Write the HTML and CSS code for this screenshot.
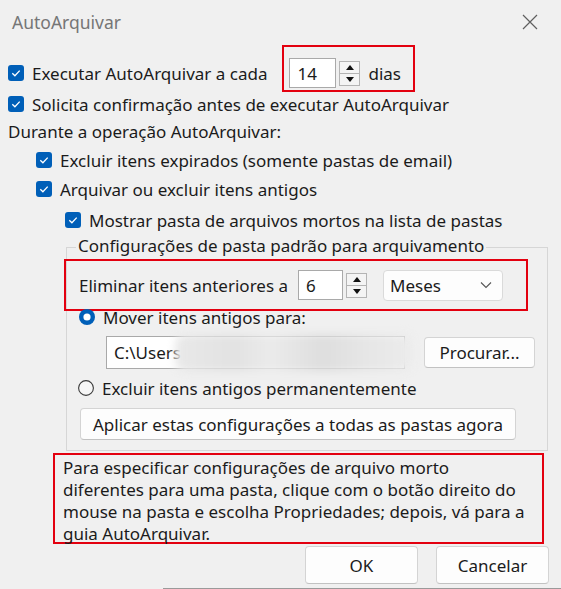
FILE: index.html
```html
<!DOCTYPE html>
<html lang="pt-BR">
<head>
<meta charset="utf-8">
<title>AutoArquivar</title>
<link rel="stylesheet" href="styles.css">
</head>
<body>
<div class="dialog">
  <div class="titlebar">
    <span class="title">AutoArquivar</span>
    <svg class="close" width="16" height="16" viewBox="0 0 16 16"><path d="M1 1 L15 15 M15 1 L1 15" stroke="#5f5f5f" stroke-width="1.2" fill="none"/></svg>
  </div>
  <div class="main">
    <div class="row r1">
      <svg class="cb" width="16" height="16" viewBox="0 0 16 16"><rect width="16" height="16" rx="3" fill="#005fb8"/><path d="M4.3 8.3 L6.9 10.8 L11.7 5.6" stroke="#fff" stroke-width="1.3" fill="none"/></svg>
      <span class="label">Executar AutoArquivar a cada</span>
      <div class="mark mark1">
        <div class="num num1">14</div>
        <div class="spin"><span class="up"></span><span class="down"></span></div>
        <span class="unit">dias</span>
      </div>
    </div>
    <div class="row r2">
      <svg class="cb" width="16" height="16" viewBox="0 0 16 16"><rect width="16" height="16" rx="3" fill="#005fb8"/><path d="M4.3 8.3 L6.9 10.8 L11.7 5.6" stroke="#fff" stroke-width="1.3" fill="none"/></svg>
      <span class="label">Solicita confirmação antes de executar AutoArquivar</span>
    </div>
    <div class="row r3">
      <span class="text">Durante a operação AutoArquivar:</span>
    </div>
    <div class="row r4 ind1">
      <svg class="cb" width="16" height="16" viewBox="0 0 16 16"><rect width="16" height="16" rx="3" fill="#005fb8"/><path d="M4.3 8.3 L6.9 10.8 L11.7 5.6" stroke="#fff" stroke-width="1.3" fill="none"/></svg>
      <span class="label">Excluir itens expirados (somente pastas de email)</span>
    </div>
    <div class="row r5 ind1">
      <svg class="cb" width="16" height="16" viewBox="0 0 16 16"><rect width="16" height="16" rx="3" fill="#005fb8"/><path d="M4.3 8.3 L6.9 10.8 L11.7 5.6" stroke="#fff" stroke-width="1.3" fill="none"/></svg>
      <span class="label">Arquivar ou excluir itens antigos</span>
    </div>
    <div class="row r6 ind2">
      <svg class="cb" width="16" height="16" viewBox="0 0 16 16"><rect width="16" height="16" rx="3" fill="#005fb8"/><path d="M4.3 8.3 L6.9 10.8 L11.7 5.6" stroke="#fff" stroke-width="1.3" fill="none"/></svg>
      <span class="label">Mostrar pasta de arquivos mortos na lista de pastas</span>
    </div>

    <div class="group">
      <div class="legend-row"><span class="legend">Configurações de pasta padrão para arquivamento</span></div>
      <div class="mark mark2">
        <span class="text">Eliminar itens anteriores a</span>
        <div class="num num2">6</div>
        <div class="spin"><span class="up"></span><span class="down"></span></div>
        <div class="select"><span>Meses</span>
          <svg width="12" height="8" viewBox="0 0 12 8"><path d="M1 1.5 L6 6.5 L11 1.5" stroke="#555" stroke-width="1.1" fill="none"/></svg>
        </div>
      </div>
      <div class="row rmove">
        <svg class="radio" width="16" height="16" viewBox="0 0 16 16"><circle cx="8" cy="8" r="8" fill="#005fb8"/><circle cx="8" cy="8" r="3.6" fill="#fff"/></svg>
        <span class="label rlabel">Mover itens antigos para:</span>
      </div>
      <div class="row rpath">
        <div class="path"><span>C:\Users</span><div class="blur"></div></div>
        <button class="btn browse">Procurar...</button>
      </div>
      <div class="row rdel">
        <svg class="radio" width="16" height="16" viewBox="0 0 16 16"><circle cx="8" cy="8" r="7.4" fill="#f6f6f6" stroke="#3a3a3a" stroke-width="1.1"/></svg>
        <span class="label rlabel">Excluir itens antigos permanentemente</span>
      </div>
      <button class="btn apply">Aplicar estas configurações a todas as pastas agora</button>
    </div>

    <div class="mark info">Para especificar configurações de arquivo morto<br>diferentes para uma pasta, clique com o botão direito do<br>mouse na pasta e escolha Propriedades; depois, vá para a<br>guia AutoArquivar.</div>

    <div class="actions">
      <button class="btn act">OK</button>
      <button class="btn act">Cancelar</button>
    </div>
  </div>
  <div class="bottomline"></div>
</div>
</body>
</html>
```
FILE: styles.css
```css
* { box-sizing: border-box; }
html, body { margin: 0; padding: 0; }
body {
  background: #f0f0f0;
  font-family: "Noto Sans", "Open Sans", sans-serif;
  font-size: 17px;
  color: #1b1b1b;
  width: 561px;
  height: 589px;
  overflow: hidden;
}
.dialog { position: relative; height: 589px; }
.titlebar {
  height: 44px;
  display: flex;
  align-items: center;
  justify-content: space-between;
  padding: 0 23px 0 12px;
}
.title { color: #767676; font-size: 17.5px; }
.close { display: block; }
.main { padding-left: 8px; }
.row { display: flex; align-items: center; height: 24px; }
.cb, .radio { flex: none; display: block; }
.label { margin-left: 8px; white-space: nowrap; }
.text { white-space: nowrap; }
.r1 { margin-top: 17px; }
.r2 { margin-top: 7px; }
.r3 { margin-top: 3px; }
.r4 { margin-top: 5px; }
.r5 { margin-top: 5px; }
.r6 { margin-top: 7px; }
.ind1 { padding-left: 28px; }
.ind2 { padding-left: 57px; }

.mark { border: 2px solid #e3000f; }
.mark1 {
  display: flex;
  align-items: center;
  margin-left: 15px;
  margin-top: -9px;
  height: 47px;
  padding: 10px 12px 1px 5px;
}
.num {
  background: #fff;
  border: 1px solid #a9a9a9;
  height: 30px;
  display: flex;
  align-items: center;
  padding-left: 7px;
}
.num1 { width: 47px; }
.spin {
  margin-left: 3px;
  width: 21px;
  height: 25px;
  border: 1px solid #b4b4b4;
  background: #f4f4f4;
  display: flex;
  flex-direction: column;
}
.spin span {
  flex: 1;
  display: flex;
  align-items: center;
  justify-content: center;
}
.spin .up { border-bottom: 1px solid #b4b4b4; }
.spin .up::after {
  content: "";
  border-left: 4px solid transparent;
  border-right: 4px solid transparent;
  border-bottom: 5px solid #111;
}
.spin .down::after {
  content: "";
  border-left: 4px solid transparent;
  border-right: 4px solid transparent;
  border-top: 5px solid #111;
}
.unit { margin-left: 8px; }

.group {
  margin-top: 15px;
  margin-left: 58px;
  width: 482px;
  border: 1px solid #d6d6d6;
  padding-bottom: 10px;
}
.legend-row { height: 20px; margin-top: -12px; line-height: 20px; white-space: nowrap; }
.legend { background: #f0f0f0; padding: 0 2px; margin-left: 9px; }
.mark2 {
  display: flex;
  align-items: center;
  margin-top: 3px;
  margin-left: -3px;
  margin-bottom: -4px;
  width: 464px;
  height: 52px;
  padding-left: 13px;
}
.num2 { width: 45px; margin-left: 10px; }
.select {
  margin-left: 16px;
  width: 120px;
  height: 31px;
  background: #fdfdfd;
  border: 1px solid #dadada;
  border-radius: 4px;
  display: flex;
  align-items: center;
  justify-content: space-between;
  padding: 0 10px 0 6px;
}
.select svg { display: block; }
.rmove { height: 20px; padding-left: 12px; }
.rlabel { margin-left: 8px; }
.rpath { height: 33px; margin-top: 9px; padding-left: 39px; }
.path {
  position: relative;
  width: 299px;
  height: 33px;
  background: #fff;
  border: 1px solid #a9a9a9;
  display: flex;
  align-items: center;
  padding-left: 7px;
}
.blur {
  position: absolute;
  left: 68px;
  top: -3px;
  width: 238px;
  height: 38px;
  background: linear-gradient(90deg, #e9e9e9 0%, #e2e2e2 25%, #ebebeb 40%, #dedede 62%, #e6e6e6 80%, #ececec 100%);
  filter: blur(4px);
  border-radius: 10px;
}
.btn {
  font-family: inherit;
  font-size: 17px;
  color: #1b1b1b;
  background: #fdfdfd;
  border: 1px solid #d4d4d4;
  border-bottom-color: #c2c2c2;
  border-radius: 4px;
  padding: 0;
  white-space: nowrap;
}
.browse { margin-left: 19px; width: 111px; height: 31px; }
.rdel { height: 20px; margin-top: 9px; padding-left: 11px; }
.apply {
  display: block;
  margin-top: 10px;
  margin-left: 13px;
  width: 436px;
  height: 32px;
}
.info {
  margin-top: 2px;
  margin-left: 45px;
  width: 491px;
  height: 91px;
  padding: 2px 0 0 8px;
  line-height: 22px;
  white-space: nowrap;
}
.actions {
  display: flex;
  justify-content: flex-end;
  gap: 18px;
  margin-top: 2px;
  padding-right: 12px;
}
.act { width: 113px; height: 38px; }
.bottomline {
  position: absolute;
  left: 163px;
  right: 0;
  top: 588px;
  height: 1px;
  background: #9a9a9a;
}
```
